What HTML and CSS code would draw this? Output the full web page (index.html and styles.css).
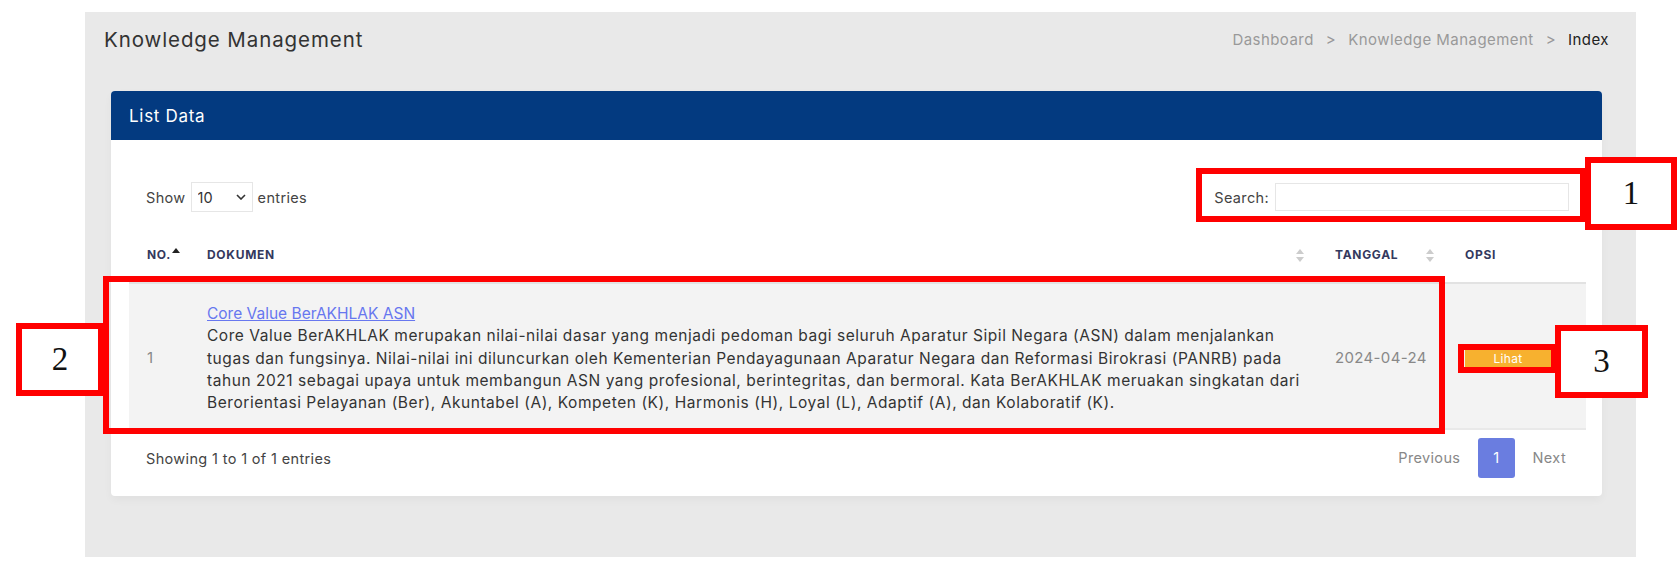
FILE: index.html
```html
<!DOCTYPE html>
<html lang="id">
<head>
  <meta charset="UTF-8" />
  <meta name="viewport" content="width=device-width, initial-scale=1.0"/>
  <title>Knowledge Management</title>
  <link rel="stylesheet" href="styles.css">
</head>
<body>

  <div class="main">
    <div class="section-header">
      <h1>Knowledge Management</h1>
      <div class="breadcrumb">
        <span>Dashboard</span>
        <span class="sep">&gt;</span>
        <span>Knowledge Management</span>
        <span class="sep">&gt;</span>
        <span class="active">Index</span>
      </div>
    </div>

    <div class="card">
      <div class="card-header">List Data</div>
      <div class="card-body">

        <div class="controls">
          <label class="length">
            Show
            <span class="select-wrap">
              <select>
                <option>10</option>
                <option>25</option>
                <option>50</option>
              </select>
              <svg class="chevron" width="10" height="6" viewBox="0 0 10 6"><path d="M1 1l4 4 4-4" fill="none" stroke="#333" stroke-width="1.6"/></svg>
            </span>
            entries
          </label>
          <label class="filter">
            Search:
            <input type="search" />
          </label>
        </div>

        <table class="data-table">
          <colgroup>
            <col class="col-no">
            <col class="col-doc">
            <col class="col-date">
            <col class="col-opt">
          </colgroup>
          <thead>
            <tr>
              <th>NO.<span class="sort-up"></span></th>
              <th class="sortable">DOKUMEN<span class="sort-both"></span></th>
              <th class="sortable">TANGGAL<span class="sort-both"></span></th>
              <th>OPSI</th>
            </tr>
          </thead>
          <tbody>
            <tr>
              <td class="muted">1</td>
              <td class="doc">
                <a href="#">Core Value BerAKHLAK ASN</a><br>
                Core Value BerAKHLAK merupakan nilai-nilai dasar yang menjadi pedoman bagi seluruh Aparatur Sipil Negara (ASN) dalam menjalankan tugas dan fungsinya. Nilai-nilai ini diluncurkan oleh Kementerian Pendayagunaan Aparatur Negara dan Reformasi Birokrasi (PANRB) pada tahun 2021 sebagai upaya untuk membangun ASN yang profesional, berintegritas, dan bermoral. Kata BerAKHLAK meruakan singkatan dari Berorientasi Pelayanan (Ber), Akuntabel (A), Kompeten (K), Harmonis (H), Loyal (L), Adaptif (A), dan Kolaboratif (K).
              </td>
              <td class="muted">2024-04-24</td>
              <td><a class="btn-lihat" href="#">Lihat</a></td>
            </tr>
          </tbody>
        </table>

        <div class="table-footer">
          <div class="info">Showing 1 to 1 of 1 entries</div>
          <div class="paging">
            <span class="page-link">Previous</span>
            <span class="page-link current">1</span>
            <span class="page-link">Next</span>
          </div>
        </div>

      </div>
    </div>
  </div>

  <!-- annotation marks drawn over the screenshot -->
  <div class="mark mark-search"></div>
  <div class="mark mark-row"></div>
  <div class="mark mark-btn"></div>
  <div class="mark label label-1">1</div>
  <div class="mark label label-2">2</div>
  <div class="mark label label-3">3</div>

</body>
</html>
```

FILE: styles.css
```css
body {
  margin: 0;
  font-family: "Inter", "Noto Sans", sans-serif;
  font-size: 15px;
  letter-spacing: 0.35px;
  background: #fff;
  color: #333;
  position: relative;
  height: 566px;
  overflow: hidden;
}

.main {
  margin: 12px 0 0 85px;
  width: 1551px;
  height: 545px;
  background: #e9e9e9;
  box-sizing: border-box;
  padding-top: 1px;
}

.section-header {
  display: flex;
  justify-content: space-between;
  align-items: center;
  height: 52px;
  padding: 0 27px 0 19px;
}

.section-header h1 {
  margin: 0;
  font-size: 20.5px;
  font-weight: 400;
  letter-spacing: 0.9px;
  color: #333;
}

.breadcrumb {
  display: flex;
  gap: 12px;
  font-size: 15px;
  letter-spacing: 0.45px;
  color: #999;
}

.breadcrumb .active {
  color: #222;
}

.card {
  margin: 26px 34px 0 26px;
  background: #fff;
  border-radius: 4px;
  box-shadow: 0 4px 8px rgba(0, 0, 0, 0.04);
}

.card-header {
  height: 49px;
  display: flex;
  align-items: center;
  padding: 0 18px;
  background: #033a80;
  color: #fff;
  font-size: 17px;
  letter-spacing: 0.7px;
  border-radius: 4px 4px 0 0;
}

.card-body {
  padding: 42px 16px 18px 18px;
}

.controls {
  display: flex;
  justify-content: space-between;
  align-items: center;
  padding: 0 17px;
  font-size: 14.5px;
  color: #444;
  margin-bottom: 16px;
}

.length, .filter {
  display: flex;
  align-items: center;
  gap: 5px;
}

.select-wrap {
  position: relative;
  display: inline-block;
}

.select-wrap select {
  appearance: none;
  width: 62px;
  height: 30px;
  padding: 0 6px;
  border: 1px solid #e6e6e6;
  background: #fff;
  font-family: inherit;
  font-size: 14.5px;
  color: #333;
}

.chevron {
  position: absolute;
  right: 7px;
  top: 12px;
  pointer-events: none;
}

.filter input {
  width: 294px;
  height: 28px;
  box-sizing: border-box;
  border: 1px solid #e6e6e6;
  margin-left: 1px;
}

.data-table {
  width: 1457px;
  border-collapse: collapse;
  table-layout: fixed;
}

.col-no { width: 60px; }
.col-doc { width: 1128px; }
.col-date { width: 130px; }
.col-opt { width: 139px; }

.data-table th {
  position: relative;
  text-align: left;
  font-size: 12px;
  font-weight: 700;
  letter-spacing: 0.7px;
  white-space: nowrap;
  color: #34395e;
  padding: 18px 18px 18px;
  line-height: 18px;
}

.sort-up {
  display: inline-block;
  width: 0;
  height: 0;
  margin-left: 1px;
  border-left: 4px solid transparent;
  border-right: 4px solid transparent;
  border-bottom: 5px solid #222;
  vertical-align: 6px;
}

.sort-both {
  position: absolute;
  right: 13px;
  top: 21px;
  width: 8px;
  height: 13px;
}

.sort-both::before, .sort-both::after {
  content: "";
  position: absolute;
  left: 0;
  border-left: 4px solid transparent;
  border-right: 4px solid transparent;
}

.sort-both::before {
  top: 0;
  border-bottom: 5px solid #ccc;
}

.sort-both::after {
  bottom: 0;
  border-top: 5px solid #ccc;
}

.data-table tbody tr {
  background: #f3f3f3;
  border-top: 2px solid #e2e2e2;
  border-bottom: 2px solid #e9e9e9;
}

.data-table td {
  padding: 19px 18px 14px;
  vertical-align: middle;
  line-height: 22.5px;
  color: #333;
}

.data-table td.doc {
  font-size: 15.5px;
  letter-spacing: 0.55px;
  line-height: 22.3px;
  padding-right: 4px;
}

.data-table td.muted {
  color: #888;
}

.doc a {
  color: #6777ef;
  letter-spacing: 0;
}

.btn-lihat {
  display: inline-block;
  width: 86px;
  height: 18px;
  line-height: 18px;
  background: #f7b12f;
  color: #fff;
  font-size: 12px;
  text-align: center;
  text-decoration: none;
}

.table-footer {
  display: flex;
  justify-content: space-between;
  align-items: center;
  padding: 8px 0 0 17px;
  font-size: 14.5px;
  color: #444;
}

.paging {
  display: flex;
  align-items: center;
  padding-right: 2px;
}

.page-link {
  padding: 0 18px;
  height: 40px;
  line-height: 40px;
  color: #888;
}

.page-link.current {
  background: #6a7de0;
  color: #fff;
  border-radius: 3px;
  padding: 0 15px;
}

.mark {
  position: absolute;
  box-sizing: border-box;
  border: 6px solid #ff0000;
}

.mark-search { left: 1196px; top: 168px; width: 390px; height: 54px; }
.mark-row    { left: 103px;  top: 276px; width: 1342px; height: 158px; }
.mark-btn    { left: 1458px; top: 344px; width: 99px; height: 29px; }

.label {
  background: #fff;
  display: flex;
  align-items: center;
  justify-content: center;
  font-family: "Liberation Serif", serif;
  font-size: 33px;
  letter-spacing: 0;
  color: #111;
}

.label-1 { left: 1585px; top: 157px; width: 92px; height: 73px; }
.label-2 { left: 16px;   top: 323px; width: 88px; height: 73px; }
.label-3 { left: 1555px; top: 325px; width: 93px; height: 73px; }
```
